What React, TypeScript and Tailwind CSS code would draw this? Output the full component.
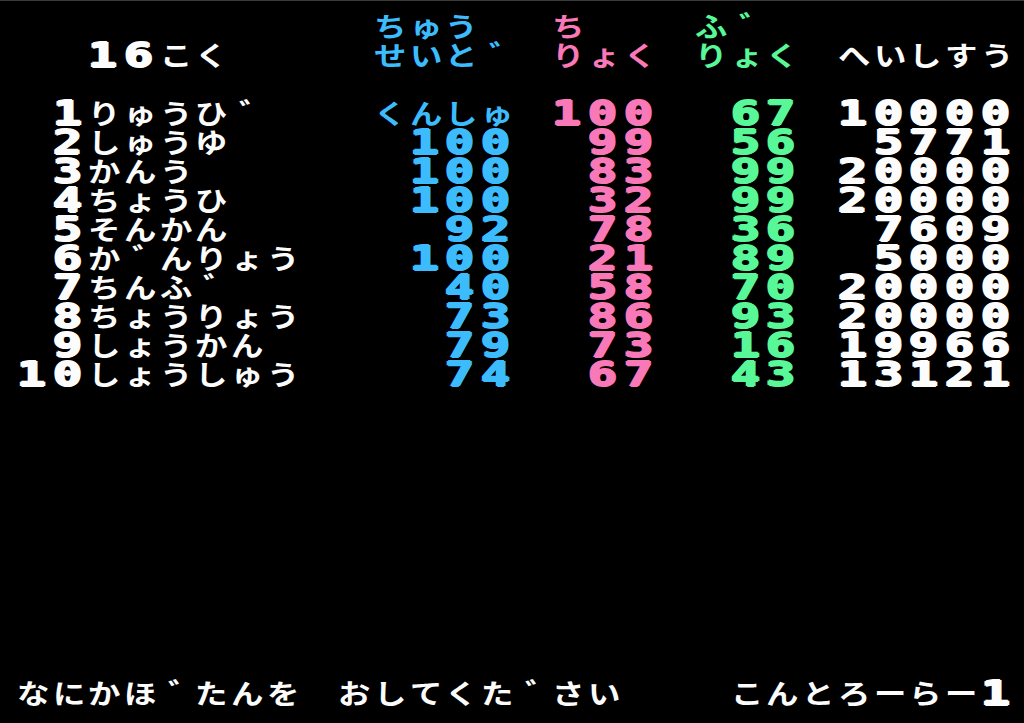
import React from "react";

type Cell = { ch: string; color: string };

const COLS = 28;
const ROWS = 24;

const WHITE = "text-[#fcfcfc]";
const BLUE = "text-[#3cbcfc]";
const PINK = "text-[#f878b8]";
const GREEN = "text-[#58f898]";

type Seg = [number, string, string];

// right-aligned number ending at column `end`
const num = (end: number, text: string, color: string): Seg => [end - text.length + 1, text, color];

const generals: [string, string, string, string, string, string][] = [
  ["1", "りゅうひ゛", "くんしゅ", "100", "67", "10000"],
  ["2", "しゅうゆ", "100", "99", "56", "5771"],
  ["3", "かんう", "100", "83", "99", "20000"],
  ["4", "ちょうひ", "100", "32", "99", "20000"],
  ["5", "そんかん", "92", "78", "36", "7609"],
  ["6", "か゛んりょう", "100", "21", "89", "5000"],
  ["7", "ちんふ゛", "40", "58", "70", "20000"],
  ["8", "ちょうりょう", "73", "86", "93", "20000"],
  ["9", "しょうかん", "79", "73", "16", "19966"],
  ["10", "しょうしゅう", "74", "67", "43", "13121"],
];

function buildScreen(): Cell[][] {
  const lines: Seg[][] = Array.from({ length: ROWS }, () => []);

  lines[0] = [[10, "ちゅう", BLUE], [15, "ち", PINK], [19, "ふ゛", GREEN]];
  lines[1] = [
    [2, "16こく", WHITE],
    [10, "せいと゛", BLUE],
    [15, "りょく", PINK],
    [19, "りょく", GREEN],
    [23, "へいしすう", WHITE],
  ];

  generals.forEach(([rank, name, loyal, wit, war, troops], i) => {
    lines[3 + i] = [
      num(1, rank, WHITE),
      [2, name, WHITE],
      loyal === "くんしゅ" ? [10, loyal, BLUE] : num(13, loyal, BLUE),
      num(17, wit, PINK),
      num(21, war, GREEN),
      num(27, troops, WHITE),
    ];
  });

  lines[23] = [
    [0, "なにかほ゛たんを", WHITE],
    [9, "おしてくた゛さい", WHITE],
    [20, "こんとろーらー1", WHITE],
  ];

  return lines.map((segs) => {
    const cells: Cell[] = Array.from({ length: COLS }, () => ({ ch: "", color: "" }));
    segs.forEach(([col, text, color]) => {
      [...text].forEach((c, i) => {
        if (col + i < COLS) cells[col + i] = { ch: c, color };
      });
    });
    return cells;
  });
}

function Glyph({ cell }: { cell: Cell }) {
  const isDigit = /[0-9]/.test(cell.ch);
  let inner: React.ReactNode = null;
  if (isDigit) {
    inner = (
      <span
        className={`inline-block h-[29px] origin-left translate-x-[1px] translate-y-[1px] scale-x-[1.42] text-[34px] leading-[29px] font-bold [text-shadow:1px_0_0_currentColor,-1px_0_0_currentColor,0_1px_0_currentColor,0_-1px_0_currentColor] [font-family:'DejaVu_Sans_Mono',monospace] ${cell.color}`}
      >
        {cell.ch}
      </span>
    );
  } else if (cell.ch === "゛") {
    inner = (
      <span
        className={`inline-block h-[29px] origin-left translate-x-[9px] scale-x-[1.2] text-[28px] leading-[29px] font-bold [font-family:'Noto_Sans_CJK_JP',sans-serif] ${cell.color}`}
      >
        {cell.ch}
      </span>
    );
  } else if (cell.ch !== "") {
    inner = (
      <span
        className={`inline-block h-[29px] origin-left translate-x-[1px] scale-x-[1.2] text-[27px] leading-[29px] font-bold [font-family:'Noto_Sans_CJK_JP',sans-serif] ${cell.color}`}
      >
        {cell.ch}
      </span>
    );
  }
  return <div className="flex h-[29px] w-[35.7px] shrink-0 items-center overflow-visible">{inner}</div>;
}

export default function App() {
  const screen = buildScreen();
  return (
    <div className="h-[723px] w-[1024px] overflow-hidden border-t border-[#3a3a3a] bg-black pt-[10px] pl-[16px]">
      <div className="flex flex-col">
        {screen.map((cells, r) => (
          <div key={r} className="flex">
            {cells.map((cell, c) => (
              <Glyph key={c} cell={cell} />
            ))}
          </div>
        ))}
      </div>
    </div>
  );
}
